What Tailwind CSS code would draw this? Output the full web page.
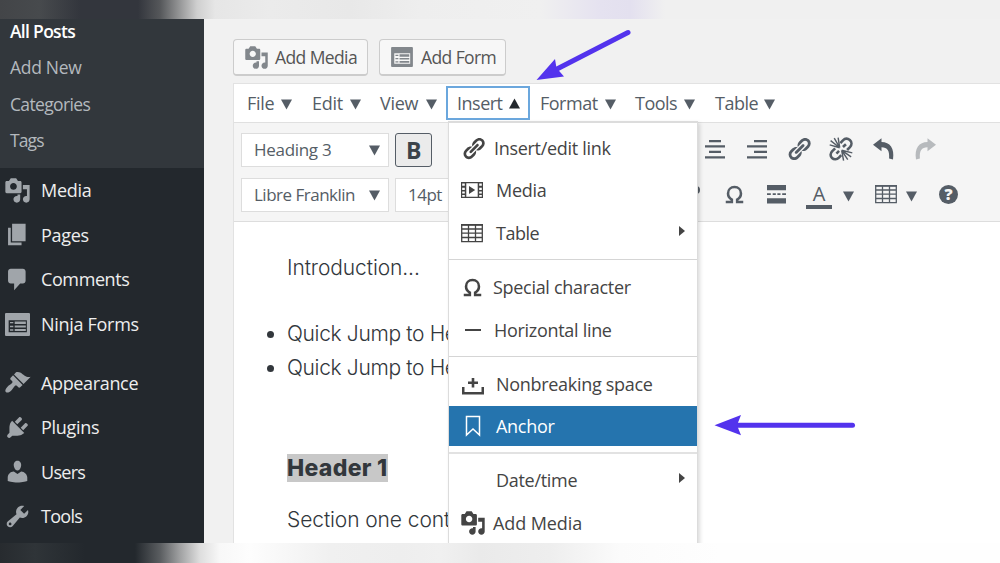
<!DOCTYPE html>
<html lang="en">
  <head>
    <meta charset="UTF-8" />
    <title>Edit Post</title>
    <script src="https://cdn.jsdelivr.net/npm/@tailwindcss/browser@4"></script>
  </head>
  <body class="w-[1000px] h-[563px] overflow-hidden flex flex-col bg-[#f1f1f1] font-['Open_Sans',sans-serif] text-[18px] leading-6 tracking-[-0.3px]">
    <!-- ICONS -->
    <svg class="hidden">
      <symbol id="media" viewBox="0 0 20 20"><path d="M13 11V4c0-.55-.45-1-1-1h-1.67L9 1H5L3.67 3H2c-.55 0-1 .45-1 1v7c0 .55.45 1 1 1h10c.55 0 1-.45 1-1zM7 4.5c1.38 0 2.5 1.12 2.5 2.5S8.38 9.5 7 9.5 4.5 8.38 4.5 7 5.62 4.5 7 4.5zM14 6h5v10.5c0 1.38-1.12 2.5-2.5 2.5S14 17.88 14 16.5s1.12-2.5 2.5-2.5c.17 0 .34.02.5.05V9h-3V6zm-4 8.05V13h2v3.5c0 1.38-1.12 2.5-2.5 2.5S7 17.88 7 16.5 8.12 14 9.5 14c.17 0 .34.02.5.05z" /></symbol>
      <symbol id="page" viewBox="0 0 20 20"><path d="M6 15V2h10v13H6zm-1 1h8v2H3V5h2v11z" /></symbol>
      <symbol id="comment" viewBox="0 0 20 20"><path d="M5 2h9c1.1 0 2 .9 2 2v7c0 1.1-.9 2-2 2h-2l-4.500 5v-5H5c-1.100 0-2-.9-2-2V4c0-1.100.9-2 2-2z" /></symbol>
      <symbol id="form" viewBox="0 0 24 22"><path fill-rule="evenodd" d="M1 0h22a1 1 0 0 1 1 1v20a1 1 0 0 1-1 1H1a1 1 0 0 1-1-1V1a1 1 0 0 1 1-1zM3.500 6.800v11.700h17.500V6.800zM4.800 8.500h3.200v1.400H4.800zM9.300 8h10.700v2.600H9.300zM9.300 12h10.700v1.800H9.300zM4.800 12.200h3.200v1.400H4.800zM4.800 15.600h3.200v1.400H4.800zM9.300 15.300h10.700v2H9.300z" /></symbol>
      <symbol id="brush" viewBox="0 0 20 20"><path d="M14.48 11.06L7.410 3.990l1.500-1.500c.5-.56 2.300-.47 3.510.32 1.210.8 1.430 1.280 2.910 2.100 1.180.64 2.450 1.260 4.450.85zm-.71.71L6.700 4.700 4.930 6.470c-.39.39-.39 1.020 0 1.410l1.060 1.060c.39.39.39 1.030 0 1.420-.6.6-1.430 1.110-2.210 1.690-.35.26-.7.53-1.010.84C1.430 14.230.4 16.080 1.400 17.070c.99 1 2.840-.03 4.180-1.360.31-.31.58-.66.85-1.020.57-.78 1.080-1.610 1.690-2.210.39-.39 1.020-.39 1.410 0l1.060 1.060c.39.39 1.020.39 1.410 0z" /></symbol>
      <symbol id="plug" viewBox="0 0 20 20"><path d="M13.110 4.360L9.870 7.600 8 5.730l3.240-3.240c.35-.34 1.050-.2 1.560.32.52.51.66 1.210.31 1.550zm-8 1.770l.91-1.120 9.010 9.010-1.190.84c-.71.71-2.630 1.160-3.820 1.160H6.140L4.900 17.260c-.59.59-1.540.59-2.120 0-.59-.58-.59-1.530 0-2.120l1.240-1.240v-3.880c0-1.130.4-3.190 1.090-3.890zm7.260 3.970l3.240-3.240c.34-.35 1.040-.21 1.550.31.52.51.66 1.210.31 1.550l-3.240 3.250z" /></symbol>
      <symbol id="user" viewBox="0 0 20 20"><path d="M10 9.250c-2.270 0-2.730-3.440-2.730-3.440C7 4.020 7.820 2 9.970 2c2.160 0 2.980 2.020 2.710 3.810 0 0-.41 3.440-2.680 3.440zm0 2.570L12.720 10c2.390 0 4.520 2.330 4.520 4.530v2.490s-3.650 1.130-7.240 1.130c-3.650 0-7.240-1.130-7.240-1.130v-2.490c0-2.250 1.940-4.480 4.470-4.480z" /></symbol>
      <symbol id="wrench" viewBox="0 0 20 20"><path d="M16.680 9.770c-1.340 1.340-3.300 1.670-4.950.99l-5.410 6.520c-.99.99-2.590.99-3.580 0s-.99-2.590 0-3.570l6.520-5.420c-.68-1.650-.35-3.610.99-4.950 1.280-1.280 3.120-1.620 4.720-1.060l-2.890 2.890 2.820 2.820 2.860-2.870c.53 1.580.18 3.390-1.080 4.650zM3.810 16.210c.4.39 1.040.39 1.430 0 .4-.4.4-1.040 0-1.430-.39-.4-1.030-.4-1.430 0-.39.39-.39 1.030 0 1.430z" /></symbol>
      <symbol id="link" viewBox="0 0 20 20"><path d="M17.740 2.760c1.680 1.690 1.680 4.410 0 6.100l-1.530 1.520c-1.120 1.120-2.700 1.470-4.140 1.090l2.620-2.610.76-.77.76-.76c.84-.84.84-2.200 0-3.040-.84-.85-2.200-.85-3.040 0l-.77.76-3.380 3.380c-.37-1.440-.02-3.020 1.100-4.140l1.520-1.530c1.690-1.680 4.420-1.680 6.100 0zM8.590 13.430l5.340-5.340c.42-.42.42-1.100 0-1.520-.44-.43-1.130-.39-1.530 0l-5.330 5.340c-.42.42-.42 1.100 0 1.520.44.43 1.130.39 1.520 0zm-.76 2.290l4.140-4.150c.38 1.440.03 3.020-1.090 4.140l-1.520 1.530c-1.690 1.680-4.410 1.680-6.100 0-1.680-1.680-1.680-4.420 0-6.100l1.530-1.520c1.120-1.120 2.700-1.470 4.140-1.100l-4.140 4.150c-.85.84-.85 2.200 0 3.050.84.84 2.200.84 3.040 0z" /></symbol>
      <symbol id="unlink" viewBox="0 0 20 20"><path fill="none" stroke="currentColor" stroke-width="2" d="M9.500 5.500l1.800-2c1.600-1.600 3.800-1.800 5.500-.4 1.700 1.600 1.600 3.900.1 5.500l-2.200 2.200M5.500 9.500L3.300 11.600c-1.700 1.700-1.700 3.900-.2 5.300 1.500 1.400 3.700 1.300 5.300-.3l1.800-1.900M6.500 13.500L8.500 11.500M11.500 8.500l2.300-2.200" /><path stroke="currentColor" stroke-width="1.100" d="M9 9L1.300 6.800M9 9L2 3.600M9 9L4.800 1.600M9 9L7.800 1.200M10.500 11l8.200 2M10.500 11l7.300 5M10.500 11l4.700 7.200M10.500 11l1.500 8" /></symbol>
      <symbol id="table" viewBox="0 0 22 20"><path fill="none" stroke="currentColor" stroke-width="1.300" d="M.7 1.700h20.600v17H.7zM.7 6h20.600M.7 10.200h20.600M.7 14.500h20.600M7.500 1.700v17M14.500 1.700v17" /><path d="M0 1h22v1.800H0z" /></symbol>
      <symbol id="omega" viewBox="0 0 20 20"><path fill="none" stroke="currentColor" stroke-width="2.700" d="M.8 17.800h6.400v-2.500C4.300 13.700 3.200 11.500 3.200 8.900 3.200 4.800 6 2.200 10 2.200s6.800 2.600 6.800 6.700c0 2.600-1.100 4.800-4 6.400v2.500h6.400" /></symbol>
      <symbol id="center" viewBox="0 0 20 20"><path d="M4 .9h12v2.300H4zM0 6.300h20v2.300H0zM4 11.800h12v2.300H4zM0 17.200h20v2.300H0z" /></symbol>
      <symbol id="right" viewBox="0 0 20 20"><path d="M7 .9h13v2.300H7zM0 6.300h20v2.300H0zM7 11.800h13v2.300H7zM0 17.200h20v2.300H0z" /></symbol>
      <symbol id="undo" viewBox="0 0 22 22"><path d="M0 6.700L8.500.2v3.900c8.500 0 13.200 6.200 11.500 17.300l-3.900-1C16.700 13 14.500 9.400 8.500 9.300v4z" /></symbol>
      <symbol id="more" viewBox="0 0 20 20"><path d="M0 0h20v5.500H0zM0 8.700h4v1.900H0zM6 8.700h3.300v1.900H6zM10.900 8.700h3.300v1.900h-3.300zM16 8.700h4v1.900h-4zM0 14h20v5.600H0z" /></symbol>
      <symbol id="down" viewBox="0 0 10 10"><path d="M0 .5h10L5 9.500z" /></symbol>
      <symbol id="sub" viewBox="0 0 6 10"><path d="M0 0l6 5-6 5z" /></symbol>
      <symbol id="play" viewBox="0 0 22 18"><path fill-rule="evenodd" d="M0 1h22v16H0zM1.200 2.500v2.300h2.600V2.500zM1.200 6.700v2.200h2.600V6.700zM1.200 10.600v2h2.600v-2zM1.200 14v1.800h2.600V14zM18.200 2.500v2.300h2.600V2.500zM18.200 6.700v2.200h2.600V6.700zM18.200 10.600v2h2.600v-2zM18.200 14v1.800h2.600V14zM5.300 2.300v13.400h11.400V2.300zM8 5l6.200 4L8 13z" /></symbol>
    </svg>

    <!-- TOP EDGE -->
    <div class="h-[19px] shrink-0 bg-[linear-gradient(90deg,#434548_0px,#474a4d_40px,#33363d_80px,#33363d_138px,#55575a_160px,#909192_178px,#cfcfcf_197px,#e6e6e6_215px,#ebebeb_270px,#e8e8e8_350px,#eeeeee_420px,#f0f0f0_540px,#e5e2f0_600px,#e3e0ef_630px,#f0f0f0_665px,#f0f0f0_1000px)]"></div>

    <div class="relative h-[524px] shrink-0 flex overflow-hidden">
      <!-- SIDEBAR -->
      <aside class="w-[204px] shrink-0 bg-[#23282d] text-[#eeeeee]">
        <ul class="h-[149px] bg-[#32373c] pl-[10px] text-[#b4b9be] text-[17.500px] leading-[36.500px] -mt-px pb-px box-content overflow-hidden">
          <li class="h-[31px] leading-[26px] font-semibold text-white tracking-[-0.7px]">All Posts</li>
          <li class="h-[36.500px]">Add New</li>
          <li class="h-[36.500px] tracking-[-0.650px]">Categories</li>
          <li class="h-[36.500px] tracking-[-0.900px]">Tags</li>
        </ul>
        <ul class="pl-1">
          <li class="h-[44.600px] flex items-center gap-[10px]"><svg class="size-[27px] fill-[#a0a5aa]"><use href="#media" /></svg>Media</li>
          <li class="h-[44.600px] flex items-center gap-[10px]"><svg class="size-[27px] fill-[#a0a5aa]"><use href="#page" /></svg>Pages</li>
          <li class="h-[44.600px] flex items-center gap-[10px] tracking-[-0.400px]"><svg class="size-[27px] fill-[#a0a5aa]"><use href="#comment" /></svg>Comments</li>
          <li class="h-[44.600px] flex items-center gap-[11px] pl-px"><svg class="w-[25px] h-[23px] fill-[#a0a5aa]"><use href="#form" /></svg>Ninja Forms</li>
        </ul>
        <ul class="pl-1 mt-[14px]">
          <li class="h-[44.600px] flex items-center gap-[10px] tracking-[-0.350px]"><svg class="size-[27px] fill-[#a0a5aa]"><use href="#brush" /></svg>Appearance</li>
          <li class="h-[44.600px] flex items-center gap-[10px]"><svg class="size-[27px] fill-[#a0a5aa]"><use href="#plug" /></svg>Plugins</li>
          <li class="h-[44.600px] flex items-center gap-[10px] tracking-[-0.7px]"><svg class="size-[27px] fill-[#a0a5aa]"><use href="#user" /></svg>Users</li>
          <li class="h-[44.600px] flex items-center gap-[10px] tracking-[-0.7px]"><svg class="size-[27px] fill-[#a0a5aa]"><use href="#wrench" /></svg>Tools</li>
        </ul>
      </aside>

      <!-- EDITOR -->
      <main class="flex-1 min-w-0 flex flex-col pl-[29px] pt-5 text-[#555d66]">
        <div class="flex gap-[11px] text-[#555555] text-[17.500px] tracking-[-0.600px]">
          <button class="w-[135px] h-[37px] flex items-center gap-[6px] pl-[10px] whitespace-nowrap bg-[#f7f7f7] border border-b-2 border-[#cccccc] rounded-[4px]"><svg class="size-[25px] shrink-0 fill-[#82878c]"><use href="#media" /></svg>Add Media</button>
          <button class="w-[127px] h-[37px] flex items-center gap-[8px] pl-[11px] whitespace-nowrap bg-[#f7f7f7] border border-b-2 border-[#cccccc] rounded-[4px]"><svg class="w-[22px] h-5 shrink-0 fill-[#82878c]"><use href="#form" /></svg>Add Form</button>
        </div>

        <div class="mt-[7px] flex-1 flex flex-col border-l border-t border-[#e2e2e2] bg-white">
          <!-- Menu bar -->
          <nav class="h-[39px] shrink-0 flex items-center pl-[13px] border-b border-[#e0e0e0] fill-[#555d66]">
            <div class="w-[65px] flex items-center"><span class="w-[34px]">File</span><svg class="size-[11px] mt-[3px]"><use href="#down" /></svg></div>
            <div class="w-[68px] flex items-center"><span class="w-[38px]">Edit</span><svg class="size-[11px] mt-[3px]"><use href="#down" /></svg></div>
            <div class="w-[66px] flex items-center"><span class="w-[46px]">View</span><svg class="size-[11px] mt-[3px]"><use href="#down" /></svg></div>
            <div class="w-[84px] h-[34px] mr-[10px] flex items-center border-2 border-[#5b9dd9]/90 pl-[9px] tracking-[-0.5px]"><span class="w-[52px]">Insert</span><svg class="size-[11px] mt-[1px] rotate-180 fill-[#23282d]"><use href="#down" /></svg></div>
            <div class="w-[95px] flex items-center"><span class="w-[65px] tracking-[-0.5px]">Format</span><svg class="size-[11px] mt-[3px]"><use href="#down" /></svg></div>
            <div class="w-[80px] flex items-center"><span class="w-[49px] tracking-[-0.5px]">Tools</span><svg class="size-[11px] mt-[3px]"><use href="#down" /></svg></div>
            <div class="flex items-center"><span class="w-[49px] tracking-[-0.5px]">Table</span><svg class="size-[11px] mt-[3px]"><use href="#down" /></svg></div>
          </nav>

          <!-- Toolbar -->
          <div class="h-[99px] shrink-0 bg-[#f5f5f5] border-b border-[#dddddd] pl-[7px] pt-[10px] flex flex-col gap-[11px] text-[17px]">
            <div class="h-[34px] flex items-center">
              <div class="w-[148px] h-[34px] flex items-center justify-between bg-white border border-[#dddddd] pl-3 pr-2">Heading 3<svg class="size-[11px] fill-[#555d66]"><use href="#down" /></svg></div>
              <div class="ml-[6px] w-[37px] h-[34px] flex items-center justify-center bg-[#ebebeb] border border-[#555d66] rounded-[3px] text-[23px] font-bold text-[#3c434a]">B</div>
              <div class="ml-[273px] mb-[2px] flex items-center text-[#555d66] fill-[#555d66]">
                <svg class="w-[20px] h-[20px] mr-[22px]"><use href="#center" /></svg>
                <svg class="w-[20px] h-[20px] mr-[19px]"><use href="#right" /></svg>
                <svg class="size-[26px] mr-[16px]"><use href="#link" /></svg>
                <svg class="size-[26px] mr-[19px]"><use href="#unlink" /></svg>
                <svg class="size-[22px] mr-[19px]"><use href="#undo" /></svg>
                <svg class="size-[22px] -scale-x-100 fill-[#b7babd]"><use href="#undo" /></svg>
              </div>
            </div>
            <div class="h-[34px] flex items-center">
              <div class="w-[148px] h-[34px] flex items-center justify-between bg-white border border-[#dddddd] pl-3 pr-2 tracking-[-0.5px]">Libre Franklin<svg class="size-[11px] fill-[#555d66]"><use href="#down" /></svg></div>
              <div class="ml-[6px] w-[90px] h-[34px] flex items-center bg-white border border-[#dddddd] pl-3 tracking-[-0.5px]">14pt</div>
              <div class="ml-[206px] mb-[2px] flex items-center fill-[#555d66] text-[#555d66]">
                <div class="w-[9px] h-2 mb-2 rounded-r-[4px] border-2 border-l-0 border-[#555d66]"></div>
                <svg class="ml-[25px] size-[19px]"><use href="#omega" /></svg>
                <svg class="ml-[23px] size-[19px]"><use href="#more" /></svg>
                <div class="ml-5 mt-1 w-[26px] h-[25px] border-b-4 border-[#555d66] text-center leading-[20px] text-[20px]">A</div>
                <svg class="ml-[11px] mt-1 size-[11px]"><use href="#down" /></svg>
                <svg class="ml-[21px] w-[22px] h-5"><use href="#table" /></svg>
                <svg class="ml-[9px] mt-1 size-[11px]"><use href="#down" /></svg>
                <div class="ml-[22px] size-[19px] rounded-full bg-[#555d66] text-[#f5f5f5] text-[16px] font-extrabold text-center leading-[19px]">?</div>
              </div>
            </div>
          </div>

          <!-- Post body -->
          <div class="flex-1 pl-[53px] text-[#32373c] font-['Inter',sans-serif] font-light text-[21px] leading-[34.500px] tracking-[-0.1px] whitespace-nowrap">
            <p class="mt-[29px]">Introduction...</p>
            <ul class="mt-[31px] list-disc tracking-[-0.350px]">
              <li>Quick Jump to He</li>
              <li>Quick Jump to He</li>
            </ul>
            <h3 class="mt-[65px] font-extrabold text-[23px] leading-[34px] tracking-[0.3px]"><span class="inline-block h-7 leading-[28px] bg-[#c8c8c8]">Header 1</span></h3>
            <p class="mt-[18px]">Section one cont</p>
          </div>
        </div>
      </main>

      <!-- INSERT MENU -->
      <div class="absolute left-[448px] top-[102px] w-[250px] h-[440px] bg-white border-2 border-[#dcdcdc] border-x shadow-[2px_2px_4px_rgba(0,0,0,0.14)] pt-1 text-[#444444] fill-[#444444]">
        <div class="h-[42.300px] flex items-center pl-3"><svg class="size-[25px]"><use href="#link" /></svg><span class="ml-[8px]">Insert/edit link</span></div>
        <div class="h-[42.300px] flex items-center pl-3"><svg class="w-[22px] h-[18px]"><use href="#play" /></svg><span class="ml-[13px]">Media</span></div>
        <div class="h-[42.300px] flex items-center pl-3"><svg class="w-[22px] h-5"><use href="#table" /></svg><span class="ml-[13px] tracking-[-0.5px]">Table</span><svg class="ml-auto mr-3 mb-1 w-[6px] h-[10px]"><use href="#sub" /></svg></div>
        <div class="mt-[5px] mb-[6px] h-px bg-[#d5d5d5]"></div>
        <div class="h-[42.300px] flex items-center pl-[14px]"><svg class="size-[19px]"><use href="#omega" /></svg><span class="ml-[11px]">Special character</span></div>
        <div class="h-[43px] flex items-center pl-[16px]"><div class="w-4 h-[2px] bg-[#444444]"></div><span class="ml-[13px]">Horizontal line</span></div>
        <div class="mt-[5px] mb-[5px] h-px bg-[#d5d5d5]"></div>
        <div class="h-[43.900px] flex items-center pl-[13px] pb-px"><svg class="w-[22px] h-5 mt-1" viewBox="0 0 22 20"><path d="M0 11h2.500v5h17v-5H22v7.500H0zM9.700 2h2.600v3.600h3.700V8h-3.700v3.600H9.700V8H6V5.600h3.700z" /></svg><span class="ml-[12px]">Nonbreaking space</span></div>
        <div class="h-[40px] flex items-center pl-4 bg-[#2574ae] text-white"><svg class="w-4 h-[22px]" viewBox="0 0 16 22"><path fill="none" stroke="#fff" stroke-width="1.500" d="M1.500 1.500h13v18.500L8 14l-6.500 6z" /></svg><span class="ml-[15px]">Anchor</span></div>
        <div class="mt-[6px] mb-[5px] h-[2px] bg-[#e2e2e2]"></div>
        <div class="h-[42.300px] flex items-center pl-[47px]"><span>Date/time</span><svg class="ml-auto mr-3 mb-1 w-[6px] h-[10px]"><use href="#sub" /></svg></div>
        <div class="h-[42.300px] flex items-center pl-[11px] tracking-[-0.1px]"><svg class="size-[26px]"><use href="#media" /></svg><span class="ml-[7px]">Add Media</span></div>
      </div>

      <!-- POINTER ARROWS -->
      <svg class="absolute left-[530px] top-[6px] w-[110px] h-[60px]" viewBox="530 25 110 60"><path stroke="#5333ed" stroke-width="5" stroke-linecap="round" d="M628 32.500L556 69.500" /><path fill="#5333ed" d="M536.500 80L555 59l1.500 9 7.500 8.500z" /></svg>
      <svg class="absolute left-[710px] top-[391px] w-[150px] h-[30px]" viewBox="710 410 150 30"><path stroke="#5333ed" stroke-width="5" stroke-linecap="round" d="M852.500 425.300H737" /><path fill="#5333ed" d="M714.500 425.300L741 415l-4 10.300 4 10z" /></svg>
    </div>

    <!-- BOTTOM EDGE -->
    <div class="h-5 shrink-0 bg-[linear-gradient(90deg,#272b2f_0px,#2f3438_35px,#23282d_85px,#23282d_135px,#5a5d60_160px,#a0a1a2_180px,#dedede_200px,#f8f8f8_220px,#fdfdfd_250px,#f0f0f0_330px,#eeeeee_400px,#f0f0f0_440px,#eaeaea_480px,#eeeeee_550px,#fbfbfb_620px,#fefefe_720px,#fefefe_1000px)]"></div>
  </body>
</html>
